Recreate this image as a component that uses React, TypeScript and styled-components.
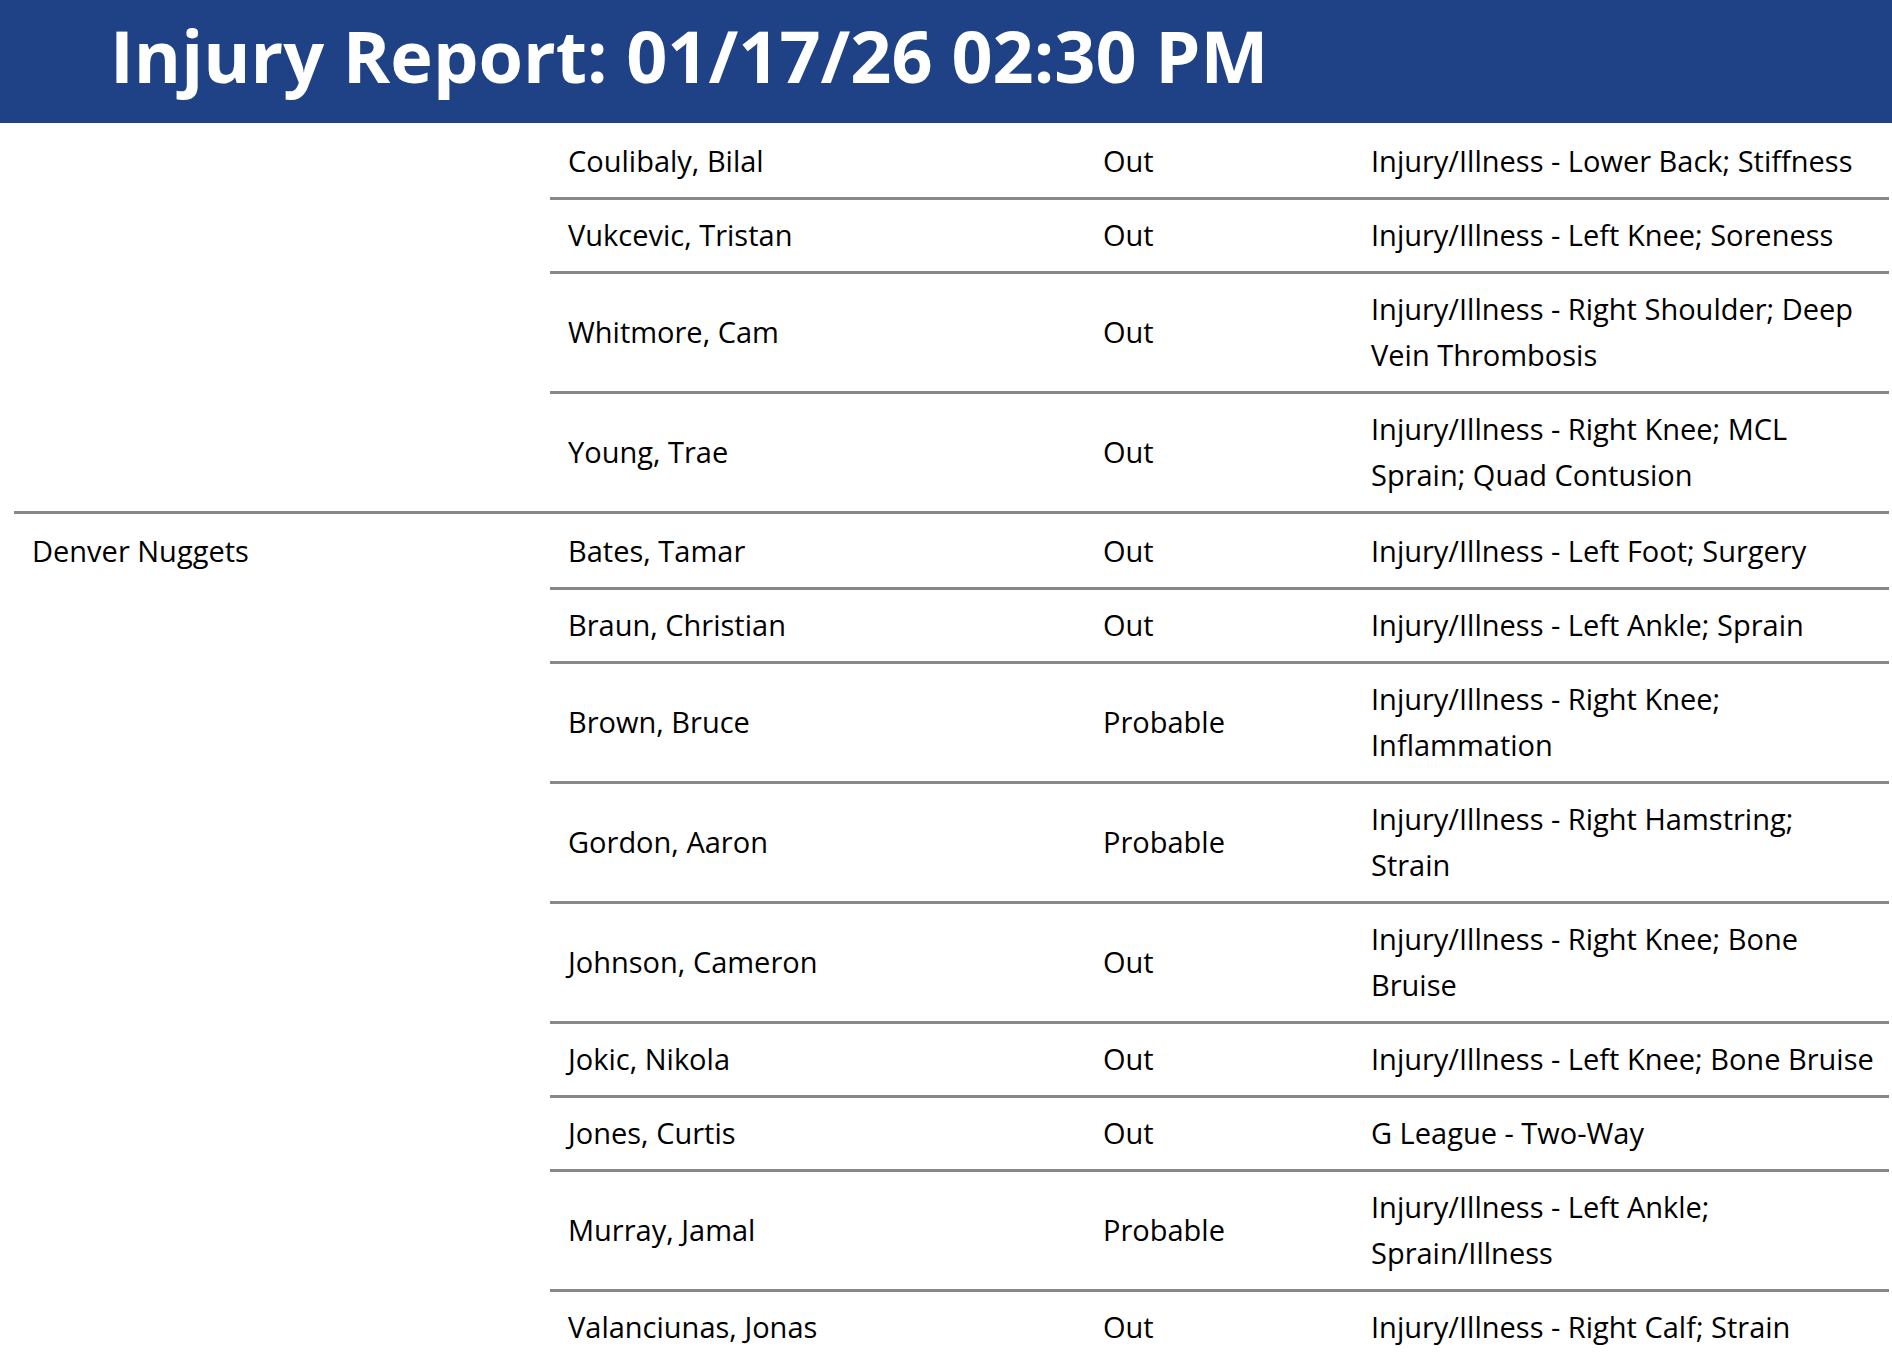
import styled, { createGlobalStyle } from "styled-components";

const GlobalStyle = createGlobalStyle`
    html, body {
        margin: 0;
        padding: 0;
        background: #ffffff;
    }
    body {
        font-family: "Open Sans", "Noto Sans", sans-serif;
        color: #000000;
        overflow: hidden;
    }
`;

const Page = styled.div`
    width: 100%;
`;

const Header = styled.header`
    height: 123px;
    background-color: #1f4287;
    display: flex;
    align-items: flex-start;
    padding: 19px 0 0 110px;
    box-sizing: border-box;
`;

const Title = styled.h1`
    margin: 0;
    color: #ffffff;
    font-size: 72px;
    font-weight: 700;
    line-height: 1;
`;

const Table = styled.div`
    margin: 0 3px 0 14px;
    padding-top: 3px;
`;

const Group = styled.section`
    display: grid;
    grid-template-columns: 536px 1fr;
    border-bottom: 3px solid #888888;
`;

const TeamCell = styled.div<{ first?: boolean }>`
    font-size: 29px;
    line-height: 46px;
    padding: ${(p) => (p.first ? "14px" : "12px")} 18px 0 18px;
`;

const Rows = styled.div`
    display: flex;
    flex-direction: column;
`;

const Row = styled.div<{ last?: boolean; lead?: boolean }>`
    display: grid;
    grid-template-columns: 535px 268px 1fr;
    align-items: center;
    padding: ${(p) => (p.lead ? "14px" : "12px")} 0 13px;
    border-bottom: ${(p) => (p.last ? "none" : "3px solid #888888")};
`;

const Cell = styled.div`
    font-size: 29px;
    line-height: 46px;
    padding: 0 10px 0 18px;
    white-space: pre;
`;

type Player = { name: string; status: string; reason: string };
type Team = { team: string; lead?: boolean; players: Player[] };

const report: Team[] = [
    {
        team: "",
        players: [
            { name: "Coulibaly, Bilal", status: "Out", reason: "Injury/Illness - Lower Back; Stiffness" },
            { name: "Vukcevic, Tristan", status: "Out", reason: "Injury/Illness - Left Knee; Soreness" },
            { name: "Whitmore, Cam", status: "Out", reason: "Injury/Illness - Right Shoulder; Deep\nVein Thrombosis" },
            { name: "Young, Trae", status: "Out", reason: "Injury/Illness - Right Knee; MCL\nSprain; Quad Contusion" },
        ],
    },
    {
        team: "Denver Nuggets",
        lead: true,
        players: [
            { name: "Bates, Tamar", status: "Out", reason: "Injury/Illness - Left Foot; Surgery" },
            { name: "Braun, Christian", status: "Out", reason: "Injury/Illness - Left Ankle; Sprain" },
            { name: "Brown, Bruce", status: "Probable", reason: "Injury/Illness - Right Knee;\nInflammation" },
            { name: "Gordon, Aaron", status: "Probable", reason: "Injury/Illness - Right Hamstring;\nStrain" },
            { name: "Johnson, Cameron", status: "Out", reason: "Injury/Illness - Right Knee; Bone\nBruise" },
            { name: "Jokic, Nikola", status: "Out", reason: "Injury/Illness - Left Knee; Bone Bruise" },
            { name: "Jones, Curtis", status: "Out", reason: "G League - Two-Way" },
            { name: "Murray, Jamal", status: "Probable", reason: "Injury/Illness - Left Ankle;\nSprain/Illness" },
            { name: "Valanciunas, Jonas", status: "Out", reason: "Injury/Illness - Right Calf; Strain" },
        ],
    },
];

function App() {
    return (
        <Page>
            <GlobalStyle />
            <Header>
                <Title>Injury Report: 01/17/26 02:30 PM</Title>
            </Header>
            <Table>
                {report.map((group, gi) => (
                    <Group key={gi}>
                        <TeamCell first={group.lead}>{group.team}</TeamCell>
                        <Rows>
                            {group.players.map((p, i) => (
                                <Row
                                    key={p.name}
                                    lead={group.lead && i === 0}
                                    last={i === group.players.length - 1}
                                >
                                    <Cell>{p.name}</Cell>
                                    <Cell>{p.status}</Cell>
                                    <Cell>{p.reason}</Cell>
                                </Row>
                            ))}
                        </Rows>
                    </Group>
                ))}
            </Table>
        </Page>
    );
}

export default App;
